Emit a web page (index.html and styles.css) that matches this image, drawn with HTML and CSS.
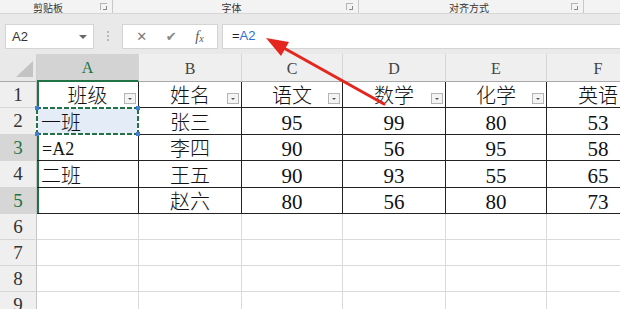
FILE: index.html
```html
<!DOCTYPE html>
<html lang="zh">
<head>
    <meta charset="UTF-8">
    <title>成绩表</title>
    <link rel="stylesheet" href="styles.css">
</head>
<body>
    <div class="page">
        <div class="ribbon">
            <div class="group g-clip"><span class="label">剪贴板</span><span class="launcher"></span></div>
            <div class="group g-font"><span class="label">字体</span><span class="launcher"></span></div>
            <div class="group g-align"><span class="label">对齐方式</span><span class="launcher"></span></div>
        </div>
        <div class="band"></div>
        <div class="formula-row">
            <div class="namebox"><span>A2</span><span class="caret"></span></div>
            <div class="dots"><i></i><i></i><i></i></div>
            <div class="fx-buttons">
                <span class="btn">&#x2715;</span>
                <span class="btn check">&#x2714;</span>
                <span class="btn fx">f<sub>x</sub></span>
            </div>
            <div class="formula">=<span class="ref">A2</span></div>
        </div>

        <div class="sheet">
            <div class="c corner"><span class="tri"></span></div>
            <div class="c ch sel">A</div>
            <div class="c ch">B</div>
            <div class="c ch">C</div>
            <div class="c ch">D</div>
            <div class="c ch">E</div>
            <div class="c ch">F</div>

            <div class="c rh">1</div>
            <div class="c t hd colA">班级<span class="filter"></span></div>
            <div class="c t hd">姓名<span class="filter"></span></div>
            <div class="c t hd">语文<span class="filter"></span></div>
            <div class="c t hd">数学<span class="filter"></span></div>
            <div class="c t hd">化学<span class="filter"></span></div>
            <div class="c t hd">英语<span class="filter"></span></div>

            <div class="c rh">2</div>
            <div class="c t l colA active">一班<span class="h tl"></span><span class="h tr"></span><span class="h bl"></span><span class="h br"></span></div>
            <div class="c t">张三</div>
            <div class="c t num">95</div>
            <div class="c t num">99</div>
            <div class="c t num">80</div>
            <div class="c t num">53</div>

            <div class="c rh sel">3</div>
            <div class="c t l colA eq">=A2</div>
            <div class="c t">李四</div>
            <div class="c t num">90</div>
            <div class="c t num">56</div>
            <div class="c t num">95</div>
            <div class="c t num">58</div>

            <div class="c rh">4</div>
            <div class="c t l colA">二班</div>
            <div class="c t">王五</div>
            <div class="c t num">90</div>
            <div class="c t num">93</div>
            <div class="c t num">55</div>
            <div class="c t num">65</div>

            <div class="c rh sel">5</div>
            <div class="c t l colA"></div>
            <div class="c t">赵六</div>
            <div class="c t num">80</div>
            <div class="c t num">56</div>
            <div class="c t num">80</div>
            <div class="c t num">73</div>

            <div class="c rh">6</div>
            <div class="c"></div><div class="c"></div><div class="c"></div><div class="c"></div><div class="c"></div><div class="c"></div>
            <div class="c rh">7</div>
            <div class="c"></div><div class="c"></div><div class="c"></div><div class="c"></div><div class="c"></div><div class="c"></div>
            <div class="c rh">8</div>
            <div class="c"></div><div class="c"></div><div class="c"></div><div class="c"></div><div class="c"></div><div class="c"></div>
            <div class="c rh">9</div>
            <div class="c"></div><div class="c"></div><div class="c"></div><div class="c"></div><div class="c"></div><div class="c"></div>
        </div>

        <!-- callout arrow pointing at the formula -->
        <svg class="arrow" width="620" height="309" viewBox="0 0 620 309">
            <line x1="384" y1="104" x2="282" y2="47" stroke="#e5261e" stroke-width="3" stroke-linecap="round"/>
            <polygon points="266,38 289,42 281,56" fill="#e5261e"/>
        </svg>
    </div>
</body>
</html>
```

FILE: styles.css
```css
body {
    margin: 0;
    background-color: #fff;
    font-family: "Noto Sans CJK SC", sans-serif;
}
.page {
    position: relative;
    width: 620px;
    height: 309px;
    overflow: hidden;
}

/* ribbon group labels */
.ribbon {
    display: flex;
    height: 14px;
    background-color: #f3f3f3;
    border-bottom: 1px solid #d6d6d6;
    box-sizing: border-box;
}
.group {
    position: relative;
    display: flex;
    justify-content: center;
    align-items: flex-start;
    border-right: 1px solid #c9c9c9;
    box-sizing: border-box;
    height: 13px;
}
.g-clip { width: 113px; padding-right: 16px; }
.g-font { width: 246px; padding-right: 8px; }
.g-align { width: 225px; padding-right: 4px; }
.label {
    position: relative;
    z-index: 1;
    font-size: 10px;
    line-height: normal;
    color: #333;
}
.launcher {
    position: absolute;
    right: 5px;
    top: 3px;
    width: 7px;
    height: 7px;
    box-sizing: border-box;
    border-left: 1px solid #b4b4b4;
    border-top: 1px solid #b4b4b4;
}
.launcher::after {
    content: "";
    position: absolute;
    right: 0;
    bottom: 0;
    width: 3px;
    height: 3px;
    border-right: 1px solid #8a8a8a;
    border-bottom: 1px solid #8a8a8a;
}
.band {
    height: 9px;
    background-color: #e9e9e9;
}

/* formula bar */
.formula-row {
    display: flex;
    align-items: flex-start;
    height: 31px;
    padding-top: 1px;
    box-sizing: border-box;
    background-color: #e9e9e9;
}
.namebox {
    display: flex;
    align-items: center;
    justify-content: space-between;
    width: 89px;
    height: 25px;
    margin-left: 5px;
    padding: 0 6px 0 6px;
    box-sizing: border-box;
    background-color: #fff;
    border: 1px solid #d4d4d4;
    font-family: "Liberation Sans", sans-serif;
    font-size: 13px;
    color: #333;
}
.caret {
    width: 0;
    height: 0;
    border-left: 4px solid transparent;
    border-right: 4px solid transparent;
    border-top: 4px solid #666;
}
.dots {
    display: flex;
    flex-direction: column;
    gap: 2px;
    width: 28px;
    align-items: center;
    padding-top: 7px;
}
.dots i {
    width: 2px;
    height: 2px;
    background-color: #b8b8b8;
}
.fx-buttons {
    display: flex;
    align-items: center;
    justify-content: space-around;
    width: 96px;
    height: 25px;
    padding: 0 4px;
    box-sizing: border-box;
    background-color: #fff;
    border: 1px solid #d4d4d4;
    color: #7a7a7a;
    font-family: "DejaVu Sans", sans-serif;
    font-size: 13px;
}
.check {
    color: #888;
}
.fx {
    font-family: "Liberation Serif", serif;
    font-style: italic;
    font-size: 14px;
    color: #555;
}
.fx sub {
    font-size: 10px;
    vertical-align: -1px;
}
.formula {
    flex: 1;
    height: 23px;
    margin-left: 4px;
    padding-left: 9px;
    background-color: #fff;
    border: 1px solid #d4d4d4;
    border-right: none;
    font-family: "Liberation Sans", sans-serif;
    font-size: 13px;
    line-height: 22px;
    color: #222;
}
.ref {
    color: #2f6fd0;
}

/* worksheet grid */
.sheet {
    display: grid;
    grid-template-columns: 37px 102px 103px 101px 103px 101px 103px;
    grid-template-rows: 28px 26px 27px 26px 27px 26px 26px 26px 26px 26px;
    width: 650px;
}
.c {
    position: relative;
    display: flex;
    justify-content: center;
    align-items: flex-end;
    box-sizing: border-box;
    border-right: 1px solid #dadada;
    border-bottom: 1px solid #dadada;
    font-family: "Liberation Serif", "Noto Sans CJK SC", serif;
    font-size: 20px;
    font-weight: 300;
    line-height: 22px;
    color: #111;
}
.corner {
    background-color: #e9e9e9;
    border-right: 1px solid #cfcfcf;
    border-bottom: 1px solid #a9a9a9;
    justify-content: flex-end;
    padding: 0 3px 4px 0;
}
.tri {
    width: 17px;
    height: 16px;
    background-color: #c3c3c3;
    clip-path: polygon(100% 0, 100% 100%, 0 100%);
}
.ch {
    align-items: center;
    background-color: #efefef;
    border-right: 1px solid #d6d6d6;
    border-bottom: 1px solid #a9a9a9;
    font-size: 16px;
    color: #444;
    padding-top: 2px;
}
.ch.sel {
    background-color: #d3d3d3;
    border-bottom: 2px solid #217346;
    color: #217346;
}
.rh {
    align-items: center;
    background-color: #efefef;
    border-right: 1px solid #c4c4c4;
    border-bottom: 1px solid #d6d6d6;
    font-size: 19px;
    color: #333;
}
.rh.sel {
    background-color: #d6d6d6;
    color: #217346;
}
.t {
    border-right: 1px solid #222;
    border-bottom: 1px solid #222;
}
.l {
    justify-content: flex-start;
    padding-left: 4px;
}
.num {
    font-size: 21px;
}
.eq {
    font-size: 18px;
    font-weight: 400;
    padding-left: 5px;
}
.colA {
    box-shadow: inset 2px 0 0 #217346;
}

/* header filter dropdown */
.filter {
    position: absolute;
    right: 2px;
    bottom: 3px;
    width: 12px;
    height: 11px;
    box-sizing: border-box;
    border: 1px solid #b5b5b5;
    background-color: #f4f4f4;
}
.filter::after {
    content: "";
    position: absolute;
    left: 3px;
    top: 4px;
    border-left: 2px solid transparent;
    border-right: 2px solid transparent;
    border-top: 2px solid #555;
}

/* copied cell: light fill, marching ants, reference handles */
.active {
    background-color: #e4ecf7;
    box-shadow: none;
}
.active::after {
    content: "";
    position: absolute;
    left: -1px;
    top: -1px;
    right: -1px;
    bottom: -1px;
    background:
        linear-gradient(90deg, #217346 70%, #fff 0) top left / 7px 2px repeat-x,
        linear-gradient(90deg, #217346 70%, #fff 0) bottom left / 7px 2px repeat-x,
        linear-gradient(0deg, #217346 70%, #fff 0) top left / 2px 7px repeat-y,
        linear-gradient(0deg, #217346 70%, #fff 0) top right / 2px 7px repeat-y;
}
.h {
    position: absolute;
    z-index: 1;
    width: 4px;
    height: 4px;
    background-color: #3f7fd6;
}
.tl { left: -2px; top: -2px; }
.tr { right: -2px; top: -2px; }
.bl { left: -2px; bottom: -2px; }
.br { right: -2px; bottom: -2px; }

.arrow {
    position: absolute;
    left: 0;
    top: 0;
    pointer-events: none;
}
```
